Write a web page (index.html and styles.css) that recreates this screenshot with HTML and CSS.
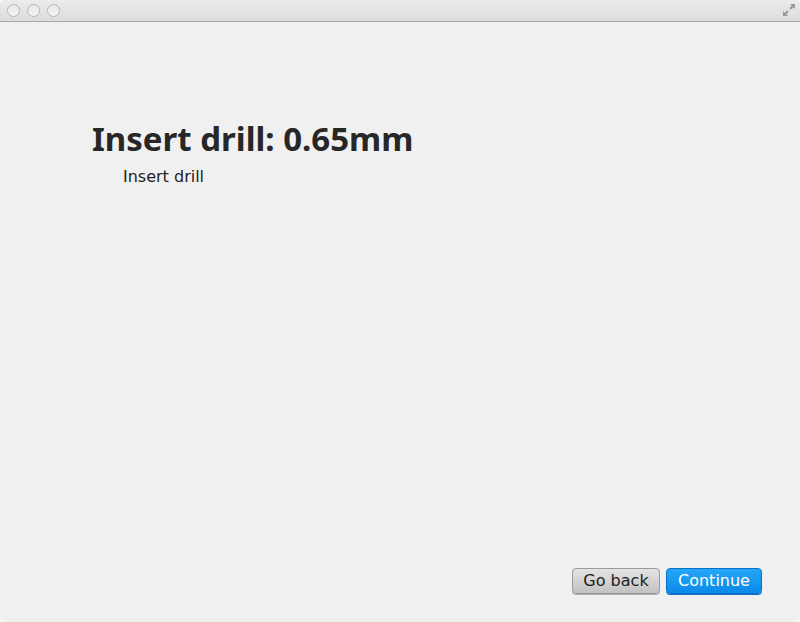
FILE: index.html
```html
<!DOCTYPE html>
<html>
<head>
<meta charset="utf-8">
<link rel="stylesheet" href="styles.css">
</head>
<body>
<div class="window">
  <div class="titlebar">
    <div class="lights">
      <span class="light"></span>
      <span class="light"></span>
      <span class="light"></span>
    </div>
    <svg class="fullscreen" width="14" height="14" viewBox="0 0 14 14">
      <path d="M8 1 L13 1 L13 6 L11.3 4.3 L8.8 6.8 L7.2 5.2 L9.7 2.7 Z" fill="#9a9a9a"/>
      <path d="M6 13 L1 13 L1 8 L2.7 9.7 L5.2 7.2 L6.8 8.8 L4.3 11.3 Z" fill="#9a9a9a"/>
    </svg>
  </div>
  <div class="content">
    <div class="main">
      <h1 class="title">Insert drill: 0.65mm</h1>
      <p class="subtitle">Insert drill</p>
    </div>
    <div class="actions">
      <button class="btn btn-back">Go back</button>
      <button class="btn btn-primary">Continue</button>
    </div>
  </div>
</div>
</body>
</html>
```
FILE: styles.css
```css
html, body {
  margin: 0;
  padding: 0;
  background: #ffffff;
}
.window {
  width: 800px;
  height: 622px;
  background: #f0f0f0;
  border-radius: 4px;
  overflow: hidden;
  display: flex;
  flex-direction: column;
  font-family: "DejaVu Sans", "Liberation Sans", sans-serif;
}
.titlebar {
  height: 21px;
  flex: none;
  border-bottom: 1px solid #a9a9a9;
  background: linear-gradient(#ececec, #dcdcdc);
  display: flex;
  align-items: center;
  justify-content: space-between;
  padding: 0 4px 0 7px;
}
.lights {
  display: flex;
  gap: 7px;
}
.light {
  width: 11px;
  height: 11px;
  border-radius: 50%;
  border: 1px solid #b5b5b5;
  background: linear-gradient(#e8e8e8, #f4f4f4);
  box-sizing: content-box;
}
.fullscreen {
  align-self: flex-start;
  margin-top: 3px;
}
.content {
  flex: 1;
  display: flex;
  flex-direction: column;
  justify-content: space-between;
  padding: 98px 38px 28px 92px;
}
.title {
  margin: 0;
  font-family: "Noto Sans", "DejaVu Sans", sans-serif;
  font-size: 33px;
  font-weight: bold;
  color: #272727;
  line-height: 38px;
}
.subtitle {
  margin: 10px 0 0 31px;
  font-size: 16px;
  color: #222222;
  line-height: 18px;
}
.actions {
  display: flex;
  justify-content: flex-end;
  gap: 6px;
}
.btn {
  height: 26px;
  font-family: "DejaVu Sans", "Liberation Sans", sans-serif;
  font-size: 16px;
  border-radius: 4px;
  padding: 0;
  line-height: 24px;
}
.btn-back {
  width: 88px;
  color: #222;
  border: 1px solid #9a9a9a;
  background: linear-gradient(#e4e4e4, #c2c2c2);
  box-shadow: 0 1px 0 #b0b0b0;
}
.btn-primary {
  width: 96px;
  color: #fff;
  border: 1px solid #0a6fc9;
  background: linear-gradient(#26a6f6, #0a8ae8);
  box-shadow: 0 1px 0 #0a6fc9;
}
```
